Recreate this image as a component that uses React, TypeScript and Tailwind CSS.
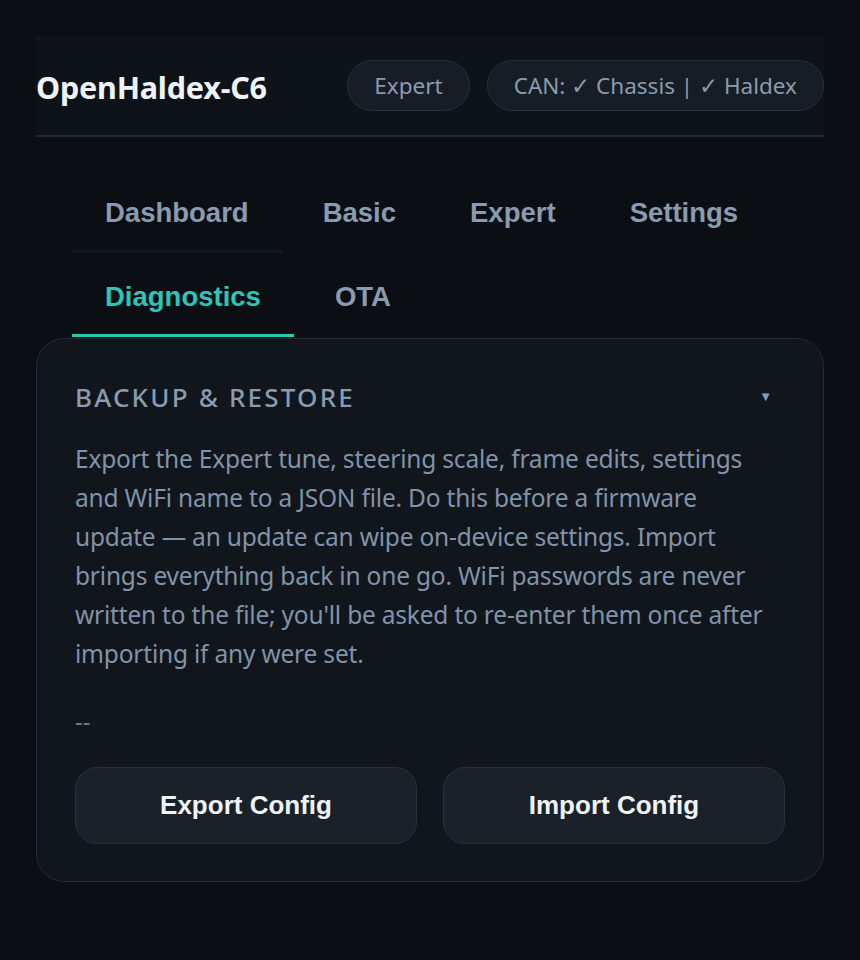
import React from "react";

const seg = { fontFamily: '"Noto Sans", "Open Sans", sans-serif' };
const ari = { fontFamily: '"Liberation Sans", Arial, sans-serif' };

export default function App() {
  const tabsRow1 = ["Dashboard", "Basic", "Expert", "Settings"];
  return (
    <div className="min-h-[960px] w-full bg-[#0b0f14] pt-[36px] px-[36px]" style={seg}>
      <header className="flex h-[101px] items-center justify-between border-b-2 border-[#1f2a33] bg-[#0e1319]">
        <h1 className="pt-[4px] text-[30.5px] font-bold tracking-[-0.2px] text-[#eef3f8]">OpenHaldex-C6</h1>
        <div className="flex items-center gap-[17px]">
          <span className="flex h-[51px] items-center rounded-full border border-[#26313b] bg-[#161d25] px-[26px] text-[22.5px] text-[#8a9bb0]">
            Expert
          </span>
          <span className="flex h-[51px] items-center rounded-full border border-[#26313b] bg-[#161d25] px-[26px] text-[22.5px] text-[#8a9bb0]">
            CAN: ✓ Chassis | ✓ Haldex
          </span>
        </div>
      </header>

      <nav className="mt-[32px] px-[36px]" style={ari}>
        <div className="flex flex-wrap gap-x-[8px]">
          {tabsRow1.map((t, i) => (
            <button
              key={t}
              className={
                "border-b-[3px] px-[33px] pt-[30px] pb-[23px] text-[27.5px] leading-[28px] font-bold text-[#8a9bb0] " +
                (i === 0 ? "border-[#0f1c1e]" : "border-transparent")
              }
            >
              {t}
            </button>
          ))}
          <button className="border-b-[3px] border-[#2ec4b6] px-[33px] pt-[30px] pb-[23px] text-[27.5px] leading-[28px] font-bold text-[#2ec4b6]">
            Diagnostics
          </button>
          <button className="border-b-[3px] border-transparent px-[33px] pt-[30px] pb-[23px] text-[27.5px] leading-[28px] font-bold text-[#8a9bb0]">
            OTA
          </button>
        </div>
      </nav>

      <section className="mt-px rounded-[28px] border border-[#232d37] bg-[#10161c] px-[38px] pt-[38px] pb-[37px]">
        <div className="flex h-[40px] items-center justify-between">
          <h2 className="text-[26px] font-medium tracking-[2.2px] text-[#8a9bb0]">BACKUP &amp; RESTORE</h2>
          <span className="mr-[13px] text-[13px] text-[#8a9bb0]">▼</span>
        </div>
        <p className="mt-[22px] max-w-[702px] text-[24.5px] leading-[39px] text-[#8193a8] tracking-[-0.2px]">
          Export the Expert tune, steering scale, frame edits, settings and WiFi name to a JSON file. Do this
          before a firmware update — an update can wipe on-device settings. Import brings everything back in one
          go. WiFi passwords are never written to the file; you'll be asked to re-enter them once after importing
          if any were set.
        </p>
        <div className="mt-[28px] text-[24px] leading-[39px] text-[#6b7a8c]">--</div>
        <div className="mt-[27px] grid grid-cols-2 gap-[26px]" style={ari}>
          <button className="h-[77px] rounded-[22px] border border-[#28323c] bg-[#1a2129] text-[26px] font-bold text-[#eef3f8]">
            Export Config
          </button>
          <button className="h-[77px] rounded-[22px] border border-[#28323c] bg-[#1a2129] text-[26px] font-bold text-[#eef3f8]">
            Import Config
          </button>
        </div>
      </section>
    </div>
  );
}
